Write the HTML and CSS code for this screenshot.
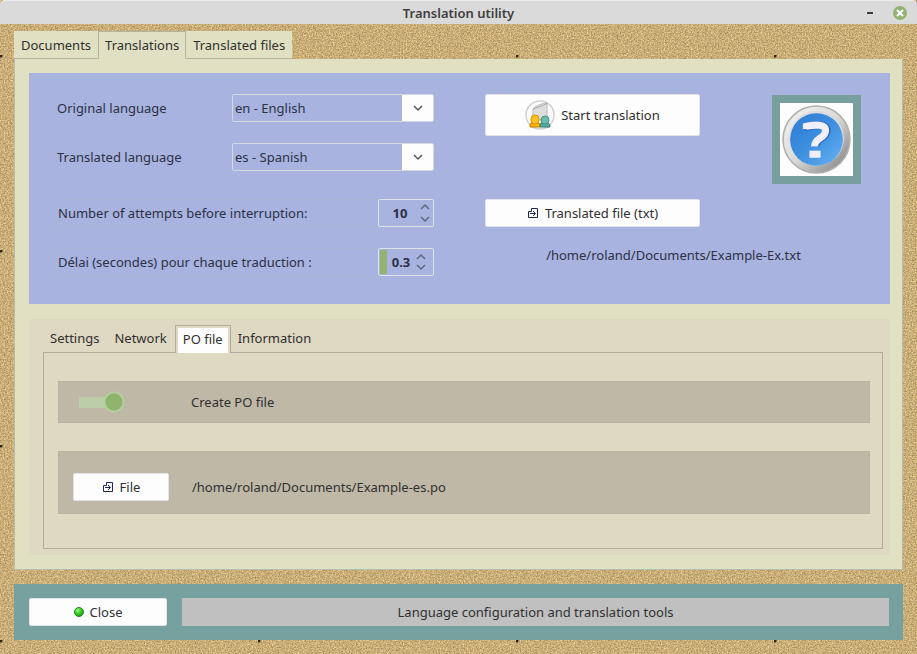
FILE: index.html
```html
<!DOCTYPE html>
<html lang="en">
<head>
    <meta charset="UTF-8">
    <meta name="viewport" content="width=device-width, initial-scale=1.0">
    <title>Translation utility</title>
    <link rel="stylesheet" href="styles.css">
</head>
<body>
    <header class="titlebar">
        <h1>Translation utility</h1>
        <div class="window-buttons">
            <button class="minimize" aria-label="Minimize"><svg width="6" height="2"><rect width="6" height="2" fill="#3a3a3a"/></svg></button>
            <button class="close-window" aria-label="Close window"><svg width="14" height="14" viewBox="0 0 14 14"><circle cx="7" cy="7" r="7" fill="#92b372"/><path d="M4 4l6 6M10 4l-6 6" stroke="#fff" stroke-width="2"/></svg></button>
        </div>
    </header>

    <main class="window">
        <nav class="tabs">
            <button class="tab">Documents</button>
            <button class="tab active">Translations</button>
            <button class="tab">Translated files</button>
        </nav>

        <div class="page">
            <section class="translation">
                <div class="options">
                    <div class="field">
                        <label for="original">Original language</label>
                        <select id="original"><option>en - English</option></select>
                    </div>
                    <div class="field">
                        <label for="translated">Translated language</label>
                        <select id="translated"><option>es - Spanish</option></select>
                    </div>
                    <div class="field framed first-framed">
                        <label for="attempts">Number of attempts before interruption:</label>
                        <div class="spin">
                            <input type="number" id="attempts" value="10">
                            <svg width="10" height="20" viewBox="0 0 10 20"><path d="M1 6l4-4 4 4M1 14l4 4 4-4"/></svg>
                        </div>
                    </div>
                    <div class="field framed">
                        <label for="delay">Délai (secondes) pour chaque traduction :</label>
                        <div class="spin progress">
                            <input type="number" id="delay" value="0.3" step="0.1">
                            <svg width="10" height="20" viewBox="0 0 10 20"><path d="M1 7l4-4 4 4M1 13l4 4 4-4"/></svg>
                        </div>
                    </div>
                </div>

                <div class="actions">
                    <div class="start-row">
                        <button class="btn start">
                            <svg width="30" height="30" viewBox="0 0 30 30">
                                <circle cx="15" cy="15" r="14" fill="#fafafa" stroke="#d2d2d2" stroke-width="1.5"/>
                                <path d="M8 9c4-4 8-5 14-6v17H8z" fill="#dedede" stroke="#b8b8b8"/>
                                <path d="M8 9c4-2 9-2 14-6" fill="none" stroke="#a5a5a5"/>
                                <path d="M7 23h6c2 0 2 1 2 4H5c0-3 0-4 2-4z" fill="#ffb400" stroke="#c28100"/>
                                <rect x="6" y="15" width="8" height="9" rx="4" fill="#ffc21c" stroke="#d99300"/>
                                <path d="M17 23h5c2 0 3 1 3 4H15c0-3 0-4 2-4z" fill="#56ad9d" stroke="#37786d"/>
                                <rect x="16" y="16" width="8" height="8" rx="4" fill="#6abcac" stroke="#478e82"/>
                            </svg>
                            Start translation
                        </button>
                        <button class="help" aria-label="Help">
                            <svg width="72" height="72" viewBox="0 0 72 72">
                                <defs>
                                    <linearGradient id="ring" x1="0" y1="0" x2="1" y2="1">
                                        <stop offset="0" stop-color="#f6f6f4"/>
                                        <stop offset="0.5" stop-color="#d9d9d7"/>
                                        <stop offset="1" stop-color="#77777a"/>
                                    </linearGradient>
                                    <linearGradient id="disc" x1="0" y1="0" x2="1" y2="1">
                                        <stop offset="0" stop-color="#2c7bd2"/>
                                        <stop offset="0.5" stop-color="#3d8fe0"/>
                                        <stop offset="1" stop-color="#68b3f4"/>
                                    </linearGradient>
                                </defs>
                                <circle cx="36" cy="36" r="33" fill="url(#ring)" stroke="#b0b0ae" stroke-width="1.5"/>
                                <circle cx="36" cy="35" r="27" fill="#dadbe0"/>
                                <circle cx="36" cy="36" r="26" fill="url(#disc)"/>
                                <path d="M27 27v-4c9-2 19-2 19 4 0 8-11 7-11 16" fill="none" stroke="#2869b4" stroke-width="8"/>
                                <path d="M26 26v-3c9-2 19-2 19 4 0 8-11 7-11 16" fill="none" stroke="#f1effc" stroke-width="7"/>
                                <rect x="29" y="47" width="11" height="7" fill="#f1effc"/>
                            </svg>
                        </button>
                    </div>
                    <button class="btn choose-txt">
                        <svg class="file-icon" width="12" height="12" viewBox="0 0 12 12"><path d="M4.5 1.5h6v9h-9v-6h3zM3 6.500h5M6 4l2.500 2.500L6 9"/></svg>
                        Translated file (txt)
                    </button>
                    <output class="txt-path">/home/roland/Documents/Example-Ex.txt</output>
                </div>
            </section>

            <section class="details">
                <nav class="subtabs">
                    <button class="subtab">Settings</button>
                    <button class="subtab">Network</button>
                    <button class="subtab active"><span>PO file</span></button>
                    <button class="subtab">Information</button>
                </nav>
                <div class="pane">
                    <div class="row create">
                        <input type="checkbox" class="switch" id="create-po" checked>
                        <label for="create-po">Create PO file</label>
                    </div>
                    <div class="row file">
                        <button class="btn choose-po">
                            <svg class="file-icon" width="12" height="12" viewBox="0 0 12 12"><path d="M4.5 1.5h6v9h-9v-6h3zM3 6.500h5M6 4l2.500 2.500L6 9"/></svg>
                            File
                        </button>
                        <output>/home/roland/Documents/Example-es.po</output>
                    </div>
                </div>
            </section>
        </div>

        <footer class="bottom">
            <button class="btn close">
                <svg width="10" height="10" viewBox="0 0 10 10">
                    <defs>
                        <radialGradient id="led" cx="0.35" cy="0.3" r="0.7">
                            <stop offset="0" stop-color="#a0f58a"/>
                            <stop offset="0.5" stop-color="#3fd02c"/>
                            <stop offset="1" stop-color="#1fa015"/>
                        </radialGradient>
                    </defs>
                    <circle cx="5" cy="5" r="4.500" fill="url(#led)" stroke="#1c8a18"/>
                </svg>
                Close
            </button>
            <p class="status">Language configuration and translation tools</p>
        </footer>
    </main>
</body>
</html>
```
FILE: styles.css
```css
* {
    box-sizing: border-box;
}

body {
    margin: 0;
    min-height: 100vh;
    font-family: "Noto Sans", "Open Sans", sans-serif;
    font-size: 13px;
    line-height: 18px;
    color: #303030;
    background-color: #cfb27c;
    /* sand */
    background-image: url("data:image/svg+xml,%3Csvg xmlns='http://www.w3.org/2000/svg' width='258' height='195'%3E%3Cfilter id='s' x='0' y='0' width='100%25' height='100%25' color-interpolation-filters='sRGB'%3E%3CfeTurbulence type='fractalNoise' baseFrequency='0.7' numOctaves='2' seed='4' stitchTiles='stitch'/%3E%3CfeColorMatrix values='.5 0 0 0 .54 .48 .06 0 0 .41 .4 0 .1 0 .22 0 0 0 0 1'/%3E%3C/filter%3E%3Crect width='258' height='195' filter='url(%23s)'/%3E%3Ccircle cx='1' cy='1' r='1.500' fill='%23302414'/%3E%3C/svg%3E");
    background-position: 0 55px;
}

button,
input,
select {
    font: inherit;
    color: inherit;
}

button {
    margin: 0;
    padding: 0;
    border: none;
    background: none;
    cursor: pointer;
}

.titlebar {
    display: grid;
    grid-template-columns: 1fr auto 1fr;
    align-items: center;
    height: 24px;
    padding: 0 10px;
    background: #dadada;
    border-top: 1px solid #ececec;
    border-radius: 5px 5px 0 0;
}

.titlebar h1 {
    grid-column: 2;
    margin: 0;
    font-size: 13px;
    font-weight: 600;
    color: #404040;
}

.window-buttons {
    display: flex;
    justify-content: flex-end;
    align-items: center;
    gap: 20px;
}

.window-buttons button {
    display: flex;
}

.window {
    padding: 7px 14px 14px;
}

.tabs {
    display: flex;
}

.tab {
    height: 28px;
    padding: 0 7px;
    background: #e0e0c2;
    border-bottom: 1px solid #b3b3a0;
}

.tab.active {
    padding: 0 6px;
    background: #e0e1c4;
    border: 1px solid #b3b3a0;
    border-bottom-color: #e0e1c4;
}

.page {
    display: flex;
    flex-direction: column;
    gap: 15px;
    padding: 14px 12px 14px 14px;
    background: #e0e1c2;
    border: 1px solid #b3bdb0;
    border-top: none;
}

.translation {
    display: flex;
    gap: 51px;
    padding: 21px 28px 28px;
    background: #a8b3e0;
    color: #2c3144;
}

.options,
.actions {
    flex: 1;
    min-width: 0;
    display: flex;
    flex-direction: column;
}

.options {
    gap: 21px;
}

.field {
    display: flex;
    align-items: center;
    justify-content: space-between;
    height: 28px;
}

.framed {
    border: 1px solid #a9b8d5;
}

.first-framed {
    margin-top: 7px;
}

.framed .spin {
    margin-right: -1px;
}

select {
    width: 202px;
    height: 28px;
    padding: 0 36px 0 2px;
    appearance: none;
    border: 1px solid #d2dade;
    border-radius: 2px;
    background-color: transparent;
    background-image:
        url("data:image/svg+xml,%3Csvg xmlns='http://www.w3.org/2000/svg' width='10' height='8'%3E%3Cpath d='M1 2l4 4 4-4' fill='none' stroke='%23555555' stroke-width='1.500'/%3E%3C/svg%3E"),
        linear-gradient(#fdfdfd, #fdfdfd);
    background-position: right 10px center, right center;
    background-size: 10px 8px, 31px 100%;
    background-repeat: no-repeat;
}

.spin {
    display: flex;
    align-items: center;
    justify-content: flex-end;
    width: 56px;
    height: 28px;
    padding-right: 3px;
    border: 1px solid #dce3e6;
    border-radius: 2px;
}

.spin input {
    width: 38px;
    padding: 0;
    border: none;
    background: none;
    font-weight: bold;
    text-align: center;
    appearance: textfield;
}

.spin input::-webkit-inner-spin-button {
    display: none;
}

.spin.progress {
    padding-right: 7px;
    background: linear-gradient(#92b372, #92b372) 1px center / 7px 24px no-repeat;
}

.spin.progress input {
    width: 28px;
}

.spin svg {
    margin-left: 1px;
    fill: none;
    stroke: #60677f;
    stroke-width: 1.5;
}

.btn {
    display: flex;
    align-items: center;
    justify-content: center;
    gap: 6px;
    height: 28px;
    border: 1px solid #e3e3e8;
    border-radius: 2px;
    background: #fdfdfd;
    color: #303030;
}

.start-row {
    display: flex;
    justify-content: space-between;
    align-items: flex-start;
    height: 90px;
    padding-right: 1px;
    margin-bottom: 15px;
}

.btn.start {
    width: 215px;
    height: 42px;
}

.help {
    display: flex;
    margin-top: 1px;
    padding: 8px;
    background: #769f9d;
}

.help svg {
    width: 73px;
    height: 73px;
    background: #fdfdfd;
}

.choose-txt {
    width: 215px;
}

.file-icon {
    fill: none;
    stroke: #1c2450;
}

.txt-path {
    display: flex;
    align-items: center;
    justify-content: center;
    height: 41px;
    margin-top: 7px;
    border: 1px solid #a9b3da;
}

.details {
    padding: 6px 7px 6px 14px;
    background: #dfd8c3;
}

.subtabs {
    display: flex;
    align-items: flex-end;
    height: 27px;
}

.subtab {
    height: 28px;
    padding: 0 7px;
}

.subtab:nth-child(2) {
    padding: 0 8px;
}

/* the open tab covers the top line of the pane */
.subtab.active {
    margin-bottom: -1px;
    padding: 2px 2px 0;
    border: 1px solid #b3ac9c;
    border-bottom: none;
    background: #dfd8c3;
    z-index: 1;
}

.subtab.active span {
    display: block;
    height: 25px;
    padding: 2px 5px;
    background: #fdfdfd;
}

.pane {
    display: flex;
    flex-direction: column;
    gap: 28px;
    padding: 28px 12px 34px 14px;
    border: 1px solid #b3ac9c;
}

.row {
    display: flex;
    align-items: center;
    background: #bfb8a7;
    border: 1px solid #b8b6a2;
}

.create {
    height: 42px;
    padding-left: 20px;
    gap: 66px;
}

.file {
    height: 63px;
    padding: 8px 14px 0;
    gap: 23px;
}

.choose-po {
    width: 96px;
}

.switch {
    width: 46px;
    height: 22px;
    margin: 0;
    appearance: none;
    background:
        radial-gradient(circle at 35px 11px, #8fb46e 8px, #b4cf9e 9px, #b4cf9e 10px, transparent 11px),
        linear-gradient(#bccdaa, #bccdaa) 0 center / 34px 11px no-repeat;
    border-radius: 4px;
}

.bottom {
    display: flex;
    gap: 15px;
    margin-top: 14px;
    padding: 14px 14px 14px 15px;
    background: #76a19f;
}

.btn.close {
    width: 138px;
}

.status {
    flex: 1;
    margin: 0;
    padding: 5px;
    background: #c0c0c1;
    text-align: center;
}
```
